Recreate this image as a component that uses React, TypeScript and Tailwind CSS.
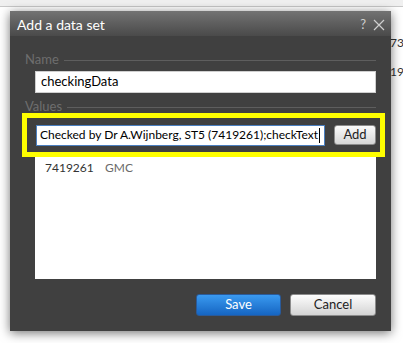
export default function App() {
  const font = { fontFamily: 'Lato, "Noto Sans", sans-serif' };
  return (
    <div className="relative h-[343px] w-[403px] overflow-hidden bg-white text-[12px]" style={font}>
      {/* page behind the dialog */}
      <div className="h-[7px] border-b border-[#c8c8c8] bg-[#f0f0f0]" />
      <div className="flex flex-col items-end pt-[29px] text-[12px] text-[#333]">
        <span className="-mr-[1px] leading-[14px]">73</span>
        <span className="-mr-[1px] mt-[15px] leading-[14px]">19</span>
      </div>

      {/* dialog */}
      <div className="absolute left-[10px] top-[11px] flex h-[320px] w-[381px] flex-col bg-[#404040] shadow-[0_2px_10px_rgba(0,0,0,0.55)]">
        <div className="flex h-[25px] items-center justify-between bg-gradient-to-b from-[#737373] to-[#4a4a4a] pl-[7px] pr-[6px] pt-[2px] text-white">
          <span className="text-[14px]">Add a data set</span>
          <div className="flex items-center gap-[7px] text-[#cfcfcf]">
            <span className="text-[13px]">?</span>
            <svg width="12" height="12" viewBox="0 0 12 12">
              <path d="M1 1L11 11M11 1L1 11" stroke="#cfcfcf" strokeWidth="1.2" />
            </svg>
          </div>
        </div>

        <div className="flex flex-1 flex-col pl-[15px] pr-[15px]">
          {/* Name */}
          <div className="mt-[15px] flex h-[18px] items-center gap-[5px] text-[13px] text-[#6e6e6e]">
            <span>Name</span>
            <div className="h-px flex-1 bg-[#5e5e5e]" />
          </div>
          <div className="ml-[10px] mt-[2px] flex h-[22px] items-center border border-[#cfcfcf] bg-white pl-[5px] text-[13px] text-black">
            checkingData
          </div>

          {/* Values */}
          <div className="mt-[7px] flex h-[14px] items-center gap-[5px] text-[13px] text-[#6e6e6e]">
            <span>Values</span>
            <div className="h-px flex-1 bg-[#5e5e5e]" />
          </div>
          <div className="-mr-[9px] -ml-[3px] mt-[-1px] flex h-[44px] items-center gap-[9px] border-[5px] border-[#ffff00] pl-[9px] pr-[4px]">
            <div className="flex h-[21px] w-[289px] min-w-0 shrink-0 items-center overflow-hidden whitespace-nowrap border border-[#4b7fbf] bg-white pl-[3px] text-[12px] text-black">
              Checked by Dr A.Wijnberg, ST5 (7419261);checkText
              <span className="ml-px h-[15px] w-px shrink-0 bg-black" />
            </div>
            <button className="flex h-[20px] w-[42px] shrink-0 items-center justify-center rounded-[3px] border border-[#8c8c8c] bg-gradient-to-b from-[#fbfbfb] to-[#d6d6d6] text-[13px] text-[#222]">
              Add
            </button>
          </div>
          <div className="ml-[10px] h-[122px] bg-white pl-[10px] pt-[2px] text-[12px]">
            <div className="flex">
              <span className="w-[60px] shrink-0 text-[#333]">7419261</span>
              <span className="text-[#6a6a6a]">GMC</span>
            </div>
          </div>

          {/* footer */}
          <div className="mt-[15px] flex justify-end gap-[9px]">
            <button className="flex h-[22px] w-[85px] items-center justify-center rounded-[3px] border border-[#2a5a99] bg-gradient-to-b from-[#3a9af0] to-[#1565c2] text-[13px] text-white">
              Save
            </button>
            <button className="flex h-[22px] w-[86px] items-center justify-center rounded-[3px] border border-[#8c8c8c] bg-gradient-to-b from-[#fdfdfd] to-[#d4d4d4] text-[13px] text-[#222]">
              Cancel
            </button>
          </div>
        </div>
      </div>
    </div>
  );
}
